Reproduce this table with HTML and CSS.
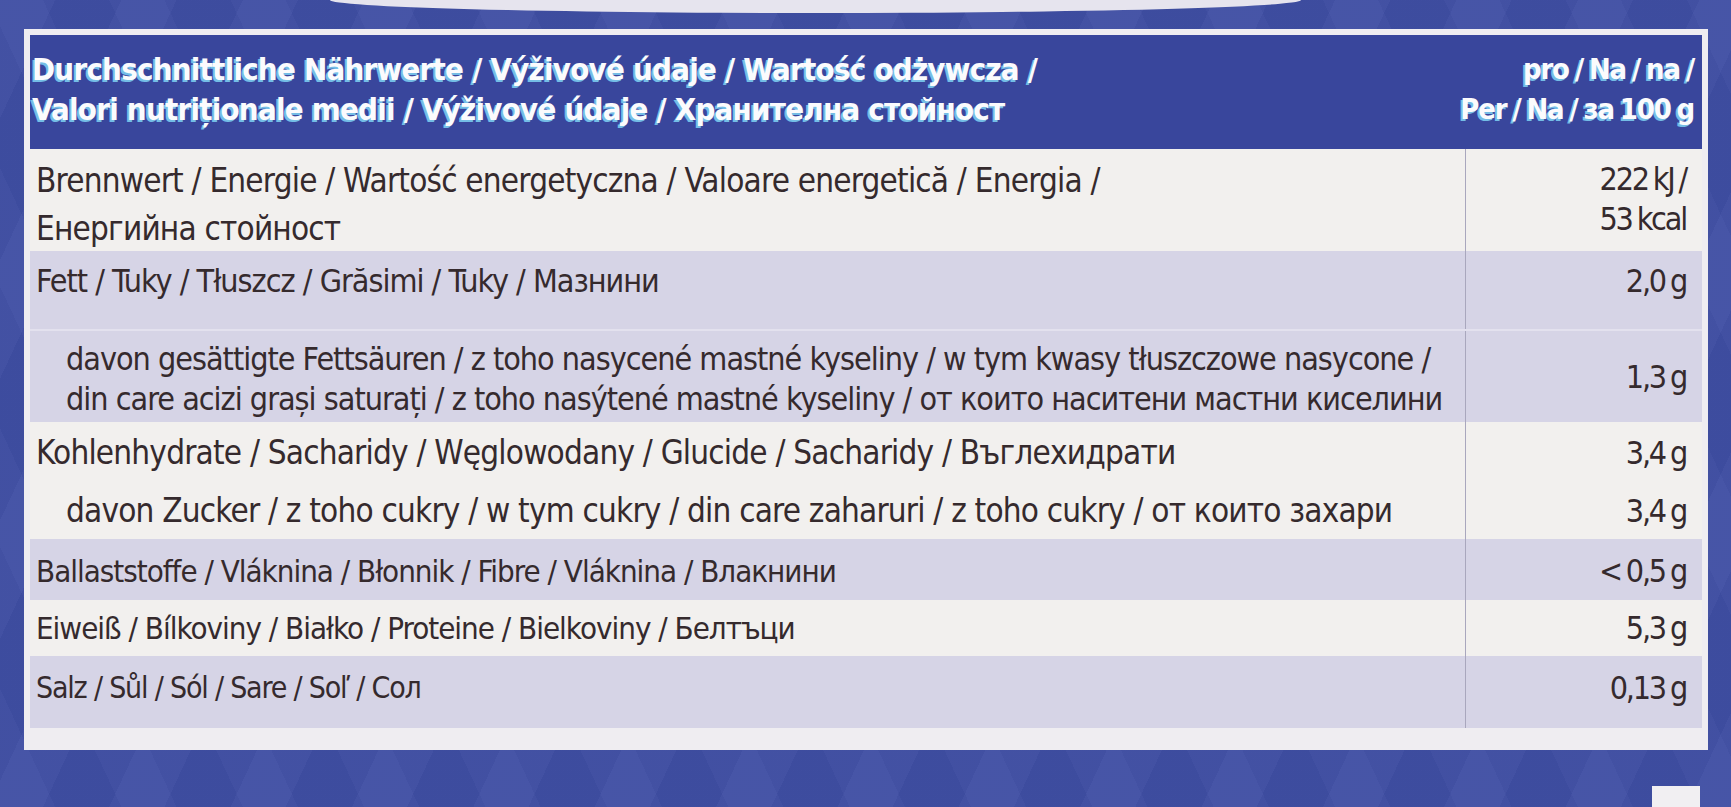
FILE: index.html
```html
<!DOCTYPE html>
<html lang="de">
<head>
<meta charset="utf-8">
<title>Nährwerte</title>
<link rel="stylesheet" href="styles.css">
</head>
<body>
<div class="rim"></div>
<section class="label">
  <header class="head">
    <div class="head-title">
      <p>Durchschnittliche Nährwerte / Výživové údaje / Wartość odżywcza /</p>
      <p>Valori nutriționale medii / Výživové údaje / Хранителна стойност</p>
    </div>
    <div class="head-unit">
      <p>pro / Na / na /</p>
      <p>Per / Na / за 100 g</p>
    </div>
  </header>

  <div class="group light energy">
    <div class="row">
      <div class="name"><p>Brennwert / Energie / Wartość energetyczna / Valoare energetică / Energia /</p><p>Енергийна стойност</p></div>
      <div class="val"><p>222 kJ /</p><p>53 kcal</p></div>
    </div>
  </div>

  <div class="group tint fat">
    <div class="row main">
      <div class="name"><p>Fett / Tuky / Tłuszcz / Grăsimi / Tuky / Мазнини</p></div>
      <div class="val"><p>2,0 g</p></div>
    </div>
    <div class="row sub">
      <div class="name"><p>davon gesättigte Fettsäuren / z toho nasycené mastné kyseliny / w tym kwasy tłuszczowe nasycone /</p><p>din care acizi grași saturați / z toho nasýtené mastné kyseliny / от които наситени мастни киселини</p></div>
      <div class="val mid"><p>1,3 g</p></div>
    </div>
  </div>

  <div class="group light carbs">
    <div class="row main">
      <div class="name"><p>Kohlenhydrate / Sacharidy / Węglowodany / Glucide / Sacharidy / Въглехидрати</p></div>
      <div class="val"><p>3,4 g</p></div>
    </div>
    <div class="row sub">
      <div class="name"><p>davon Zucker / z toho cukry / w tym cukry / din care zaharuri / z toho cukry / от които захари</p></div>
      <div class="val"><p>3,4 g</p></div>
    </div>
  </div>

  <div class="group tint fibre">
    <div class="row">
      <div class="name"><p>Ballaststoffe / Vláknina / Błonnik / Fibre / Vláknina / Влакнини</p></div>
      <div class="val"><p>&lt; 0,5 g</p></div>
    </div>
  </div>

  <div class="group light protein">
    <div class="row">
      <div class="name"><p>Eiweiß / Bílkoviny / Białko / Proteine / Bielkoviny / Белтъци</p></div>
      <div class="val"><p>5,3 g</p></div>
    </div>
  </div>

  <div class="group tint salt">
    <div class="row">
      <div class="name"><p>Salz / Sůl / Sól / Sare / Soľ / Сол</p></div>
      <div class="val"><p>0,13 g</p></div>
    </div>
  </div>
</section>
<div class="foot"><div class="next-label"></div></div>
</body>
</html>
```
FILE: styles.css
```css
* { box-sizing: border-box; }
html, body { margin: 0; padding: 0; }
body {
  width: 1731px;
  height: 807px;
  overflow: hidden;
  background-color: #3f4ea3;
  background-image:
    repeating-linear-gradient(115deg, rgba(255,255,255,0.025) 0 50px, rgba(0,0,0,0.015) 50px 110px),
    repeating-linear-gradient(65deg, rgba(255,255,255,0.02) 0 50px, rgba(0,0,0,0.012) 50px 110px);
  font-family: "Liberation Sans Narrow", "DejaVu Sans Condensed", "Liberation Sans", sans-serif;
  font-stretch: condensed;
  color: #352a2d;
}
p { margin: 0; white-space: nowrap; }

.rim {
  height: 13px;
  margin: 0 430px 0 330px;
  background: #e6e4ee;
  border-radius: 0 0 50% 50% / 0 0 100% 100%;
}

.label {
  margin: 16px 23px 0 24px;
  border: 6px solid #efedf1;
  border-bottom-width: 22px;
  background: #f2f0ee;
}

.head {
  height: 114px;
  background: #39469c;
  display: grid;
  grid-template-columns: minmax(0, 1fr) 236px;
  padding: 14px 8px 0 2px;
  color: #fbfbfd;
  font-weight: bold;
  font-size: 31px;
  letter-spacing: -0.8px;
  line-height: 40px;
  text-shadow: -2px 2px 0 #74bde6;
}
.head-unit {
  text-align: right;
  font-size: 29px;
  letter-spacing: -1.2px;
  word-spacing: -2px;
}

.group.light { background: #f2f0ee; }
.group.tint { background: #d6d4e6; }

.row {
  display: grid;
  grid-template-columns: minmax(0, 1fr) 236px;
  font-size: 33px;
  letter-spacing: -0.8px;
  line-height: 40px;
}
.name {
  border-right: 1px solid #a9a7bd;
  padding-left: 6px;
}
.val {
  text-align: right;
  padding-right: 16px;
  font-size: 32px;
  letter-spacing: -2.2px;
  word-spacing: -2px;
}
.val.mid { display: flex; flex-direction: column; justify-content: center; }

.energy .row { height: 102px; }
.energy .name { padding-top: 8px; line-height: 48px; }
.energy .val { padding-top: 10px; }

.fat .main { height: 80px; border-bottom: 2px solid #e3e1ee; }
.fat .main .name, .fat .main .val { padding-top: 10px; }
.fat .main .name { font-size: 32px; letter-spacing: -1px; }
.fat .sub { height: 91px; }
.fat .sub .name { padding-top: 8px; padding-left: 36px; font-size: 32px; letter-spacing: -1px; }

.carbs .main { height: 62px; }
.carbs .sub { height: 55px; }
.carbs .main .name, .carbs .main .val { padding-top: 11px; }
.carbs .sub .name { padding-left: 36px; }
.carbs .sub .name, .carbs .sub .val { padding-top: 7px; }

.fibre .name, .protein .name { font-size: 31px; letter-spacing: -1px; }
.salt .name { font-size: 30px; letter-spacing: -1.2px; }
.fibre .row { height: 61px; }
.fibre .name, .fibre .val { padding-top: 12px; }
.protein .row { height: 56px; }
.protein .name, .protein .val { padding-top: 8px; }
.salt .row { height: 72px; }
.salt .name, .salt .val { padding-top: 12px; }

.foot {
  display: flex;
  justify-content: flex-end;
  padding: 36px 31px 0 0;
}
.next-label {
  width: 48px;
  height: 30px;
  background: #f1eff2;
}
```
